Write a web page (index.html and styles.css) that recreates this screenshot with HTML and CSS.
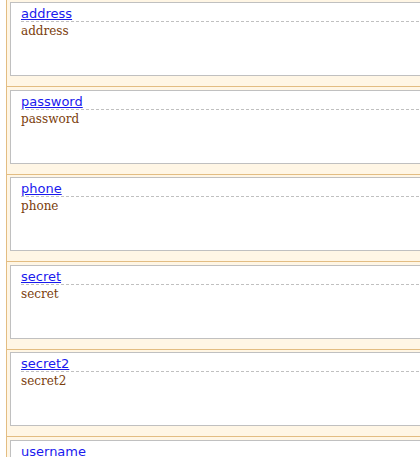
FILE: index.html
```html
<!DOCTYPE html>
<html>
<head>
<meta charset="utf-8">
<link rel="stylesheet" href="styles.css">
</head>
<body>
<div class="list">
  <div class="item"><div class="box"><div class="label"><a href="#">address</a></div><div class="value">address</div></div></div>
  <div class="item"><div class="box"><div class="label"><a href="#">password</a></div><div class="value">password</div></div></div>
  <div class="item"><div class="box"><div class="label"><a href="#">phone</a></div><div class="value">phone</div></div></div>
  <div class="item"><div class="box"><div class="label"><a href="#">secret</a></div><div class="value">secret</div></div></div>
  <div class="item"><div class="box"><div class="label"><a href="#">secret2</a></div><div class="value">secret2</div></div></div>
  <div class="item"><div class="box"><div class="label"><a href="#">username</a></div><div class="value">username</div></div></div>
</div>
</body>
</html>
```
FILE: styles.css
```css
html, body {
  margin: 0;
  padding: 0;
  overflow: hidden;
  background: #ffffff;
}
.list {
  margin-left: 6px;
  border-left: 1px solid #e3bd82;
  overflow: hidden;
}
.item {
  background: #fff6e5;
  padding: 2.6px 0 10px 3px;
  border-bottom: 1px solid #e3bd82;
}
.item:first-child {
  padding-top: 2px;
}
.box {
  box-sizing: border-box;
  height: 74px;
  margin-right: -30px;
  background: #ffffff;
  border: 1px solid #c0c0c0;
  padding: 4px 0 0 10px;
}
.label {
  font-family: "DejaVu Sans", Verdana, sans-serif;
  font-size: 13px;
  line-height: 14px;
  border-bottom: 1px dashed #c0c0c0;
}
.label a {
  color: #1a1aee;
  text-decoration: underline;
}
.value {
  font-family: "DejaVu Serif", Georgia, serif;
  font-size: 12px;
  line-height: 14px;
  padding-top: 2px;
  color: #7a3d0c;
}
```
